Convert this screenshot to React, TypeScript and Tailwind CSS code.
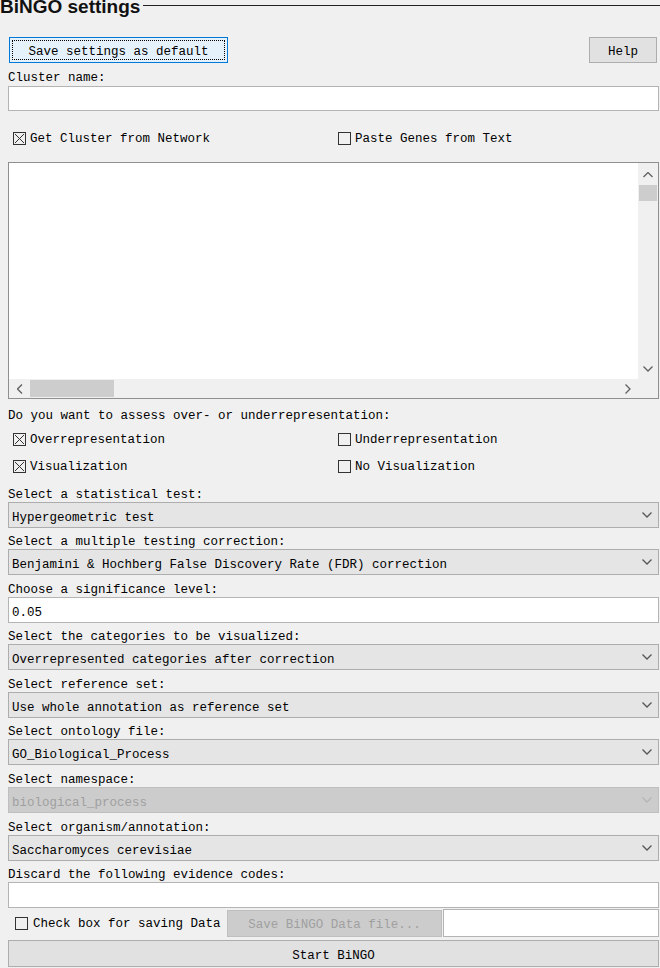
import type { ReactNode } from 'react';

const FONT = "font-['Liberation_Mono',monospace]";

function CheckBox({ checked }: { checked?: boolean }) {
  return (
    <svg width="13" height="13" viewBox="0 0 13 13" className="shrink-0">
      <rect x="0.5" y="0.5" width="12" height="12" fill="none" stroke="#333" />
      {checked && (
        <g stroke="#333" strokeWidth="1">
          <line x1="2" y1="2" x2="11" y2="11" />
          <line x1="11" y1="2" x2="2" y2="11" />
        </g>
      )}
    </svg>
  );
}

function Check({ label, checked }: { label: string; checked?: boolean }) {
  return (
    <div className="flex items-center gap-[4px]">
      <CheckBox checked={checked} />
      <span className="leading-none pt-[2px]">{label}</span>
    </div>
  );
}

function Label({ children, h }: { children: ReactNode; h: number }) {
  return (
    <div
      className="flex items-center pt-[8px] leading-none text-black whitespace-nowrap"
      style={{ height: h }}
    >
      {children}
    </div>
  );
}

function Chevron({ color = '#555', dir = 'down' }: { color?: string; dir?: 'down' | 'up' | 'left' | 'right' }) {
  const pts = {
    down: '0.5,0.5 5,5 9.5,0.5',
    up: '0.5,5 5,0.5 9.5,5',
    left: '5,0.5 0.5,5 5,9.5',
    right: '0.5,0.5 5,5 0.5,9.5',
  }[dir];
  const vertical = dir === 'down' || dir === 'up';
  return (
    <svg
      width={vertical ? 10 : 6}
      height={vertical ? 6 : 10}
      viewBox={vertical ? '0 0 10 6' : '0 0 6 10'}
      className="shrink-0"
    >
      <polyline points={pts} fill="none" stroke={color} strokeWidth="1.3" />
    </svg>
  );
}

function Dropdown({ value, disabled }: { value: string; disabled?: boolean }) {
  return (
    <div
      className={`flex items-center h-[26px] border pl-[3px] pr-[6px] ${
        disabled
          ? 'bg-[#cccccc] border-[#bfbfbf] text-[#a0a0a0]'
          : 'bg-[#e5e5e5] border-[#adadad] text-black'
      }`}
    >
      <span className="flex-1 leading-none pt-[6px] whitespace-nowrap">{value}</span>
      <Chevron color={disabled ? '#b5b5b5' : '#555'} />
    </div>
  );
}

function TextField({ value = '', h = 26 }: { value?: string; h?: number }) {
  return (
    <div
      className="flex items-center bg-white border border-[#b4b4b4] pl-[3px] pt-[6px] leading-none text-black"
      style={{ height: h }}
    >
      {value}
    </div>
  );
}

function TextArea() {
  return (
    <div className="flex flex-col h-[237px] border border-[#8f8f8f] bg-white">
      <div className="flex flex-1 min-h-0">
        <div className="flex-1 bg-white" />
        <div className="w-[20px] flex flex-col bg-[#f0f0f0]">
          <div className="h-[22px] flex items-center justify-center pt-[1px]">
            <Chevron dir="up" color="#606060" />
          </div>
          <div className="h-[16px] bg-[#cdcdcd] mx-[1px]" />
          <div className="flex-1" />
          <div className="h-[20px] flex items-center justify-center">
            <Chevron dir="down" color="#606060" />
          </div>
        </div>
      </div>
      <div className="flex h-[19px] bg-[#f0f0f0]">
        <div className="w-[21px] flex items-center justify-center">
          <Chevron dir="left" color="#606060" />
        </div>
        <div className="w-[84px] bg-[#cdcdcd] my-[1px]" />
        <div className="flex-1" />
        <div className="w-[20px] flex items-center justify-center">
          <Chevron dir="right" color="#606060" />
        </div>
        <div className="w-[20px]" />
      </div>
    </div>
  );
}

export default function App() {
  return (
    <div className={`w-[660px] h-[968px] overflow-hidden bg-[#f0f0f0] text-[12.5px] ${FONT}`}>
      {/* Title */}
      <div className="flex items-start h-[15px]">
        <span className="font-['Liberation_Sans',Arial,sans-serif] font-bold text-[19px] leading-[14px] text-[#111] whitespace-nowrap">
          BiNGO settings
        </span>
        <div className="flex-1 h-px bg-[#222] mt-[5px] ml-[3px]" />
      </div>

      <div className="pl-[8px] pr-[1px]">
        {/* Buttons */}
        <div className="flex justify-between mt-[22px] h-[26px]">
          <button className="ml-[1px] w-[219px] h-[26px] border border-[#0078d7] bg-[#e5f1fb] p-[2px]">
            <div className="w-full h-full border border-dotted border-black flex items-center justify-center leading-none pt-[5px]">
              Save settings as default
            </div>
          </button>
          <button className="mr-[2px] w-[68px] h-[26px] border border-[#adadad] bg-[#e1e1e1] leading-none pt-[5px]">
            Help
          </button>
        </div>

        <Label h={23}>Cluster name:</Label>
        <TextField h={25} />

        <div className="flex items-center h-[51px] pt-[4px] pl-[5px]">
          <div className="w-[325px]">
            <Check label="Get Cluster from Network" checked />
          </div>
          <Check label="Paste Genes from Text" />
        </div>

        <TextArea />

        <Label h={26}>Do you want to assess over- or underrepresentation:</Label>
        <div className="flex items-center h-[27px] pl-[5px] pt-[1px]">
          <div className="w-[325px]">
            <Check label="Overrepresentation" checked />
          </div>
          <Check label="Underrepresentation" />
        </div>
        <div className="flex items-center h-[28px] pl-[5px]">
          <div className="w-[325px]">
            <Check label="Visualization" checked />
          </div>
          <Check label="No Visualization" />
        </div>

        <Label h={22}>Select a statistical test:</Label>
        <Dropdown value="Hypergeometric test" />
        <Label h={21}>Select a multiple testing correction:</Label>
        <Dropdown value="Benjamini & Hochberg False Discovery Rate (FDR) correction" />
        <Label h={22}>Choose a significance level:</Label>
        <TextField value="0.05" />
        <Label h={21}>Select the categories to be visualized:</Label>
        <Dropdown value="Overrepresented categories after correction" />
        <Label h={22}>Select reference set:</Label>
        <Dropdown value="Use whole annotation as reference set" />
        <Label h={21}>Select ontology file:</Label>
        <Dropdown value="GO_Biological_Process" />
        <Label h={22}>Select namespace:</Label>
        <Dropdown value="biological_process" disabled />
        <Label h={22}>Select organism/annotation:</Label>
        <Dropdown value="Saccharomyces cerevisiae" />
        <Label h={21}>Discard the following evidence codes:</Label>
        <TextField />

        {/* Save row */}
        <div className="flex items-center h-[30px]">
          <div className="w-[219px] pl-[7px]">
            <div className="flex items-center gap-[5px]">
              <CheckBox />
              <span className="leading-none pt-[2px]">Check box for saving Data</span>
            </div>
          </div>
          <button className="w-[215px] h-[27px] border border-[#bfbfbf] bg-[#cccccc] text-[#a0a0a0] leading-none pt-[5px]">
            Save BiNGO Data file...
          </button>
          <div className="flex-1 h-[28px] ml-[1px] bg-white border border-[#b4b4b4]" />
        </div>

        <button className="mt-[2px] w-full h-[27px] border border-[#adadad] bg-[#e1e1e1] leading-none pt-[5px]">
          Start BiNGO
        </button>
      </div>
    </div>
  );
}
